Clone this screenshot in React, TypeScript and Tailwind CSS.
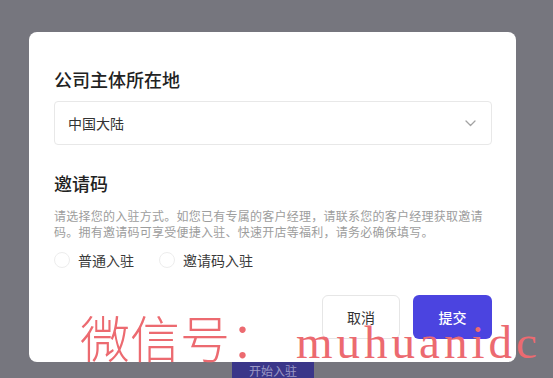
import React from "react";

const CJK = { fontFamily: '"Noto Sans CJK SC", "Noto Sans", sans-serif' };

function ChevronDown() {
  return (
    <svg width="11" height="7" viewBox="0 0 11 7" fill="none">
      <path d="M1 1L5.5 5.5L10 1" stroke="#a3a3a3" strokeWidth="1.3" strokeLinecap="round" strokeLinejoin="round" />
    </svg>
  );
}

function Radio({ label }: { label: string }) {
  return (
    <label className="flex items-center gap-[8px]">
      <span className="w-[16px] h-[16px] rounded-full border border-[#ededed] bg-white" />
      <span className="text-[14px] leading-[20px] text-[#3a3a3a]">{label}</span>
    </label>
  );
}

export default function App() {
  return (
    <div className="relative w-[553px] h-[378px] overflow-hidden bg-[#76767e]" style={CJK}>
      {/* page content behind the overlay */}
      <div className="flex justify-center pt-[362px] pr-[7px]">
        <div className="w-[82px] h-[30px] bg-[#3a3689] flex justify-center pt-[1px]">
          <span className="text-[12px] leading-[16px] text-[#9b98c4]">开始入驻</span>
        </div>
      </div>

      {/* dialog */}
      <div className="absolute left-[29px] top-[32px] w-[487px] h-[330px] bg-white rounded-[8px] pl-[25px] pr-[24px] pt-[34px]">
        <div className="text-[18px] leading-[26px] font-medium text-[#222]">公司主体所在地</div>
        <div className="mt-[9px] h-[44px] border border-[#e8e8e8] rounded-[4px] flex items-center justify-between pl-[13px] pr-[15px]">
          <span className="text-[14px] text-[#333]">中国大陆</span>
          <ChevronDown />
        </div>

        <div className="mt-[25px] text-[18px] leading-[26px] font-medium text-[#222]">邀请码</div>
        <div className="mt-[12px] text-[12px] leading-[16px] tracking-[0.25px] text-[#9d9d9d]">
          请选择您的入驻方式。如您已有专属的客户经理，请联系您的客户经理获取邀请
          <br />
          码。拥有邀请码可享受便捷入驻、快速开店等福利，请务必确保填写。
        </div>
        <div className="mt-[10px] flex items-center gap-[25px]">
          <Radio label="普通入驻" />
          <Radio label="邀请码入驻" />
        </div>

        <div className="mt-[25px] flex justify-end gap-[13px]">
          <button className="w-[78px] h-[44px] rounded-[6px] border border-[#e6e6e6] bg-white text-[14px] text-[#333]">
            取消
          </button>
          <button className="w-[79px] h-[44px] rounded-[6px] bg-[#4b44e0] text-[14px] font-medium text-white">
            提交
          </button>
        </div>
      </div>

      {/* watermark */}
      <div className="absolute left-[80px] top-[306px] flex items-baseline whitespace-nowrap text-[#ec6a70] pointer-events-none">
        <span className="text-[50px] leading-[60px] font-light" style={{ fontFamily: '"Noto Sans CJK SC", serif' }}>
          微信号：
        </span>
        <span
          className="ml-[16px] text-[47px] leading-[60px] tracking-[4px]"
          style={{ fontFamily: '"Liberation Serif", serif' }}
        >
          muhuanidc
        </span>
      </div>
    </div>
  );
}
